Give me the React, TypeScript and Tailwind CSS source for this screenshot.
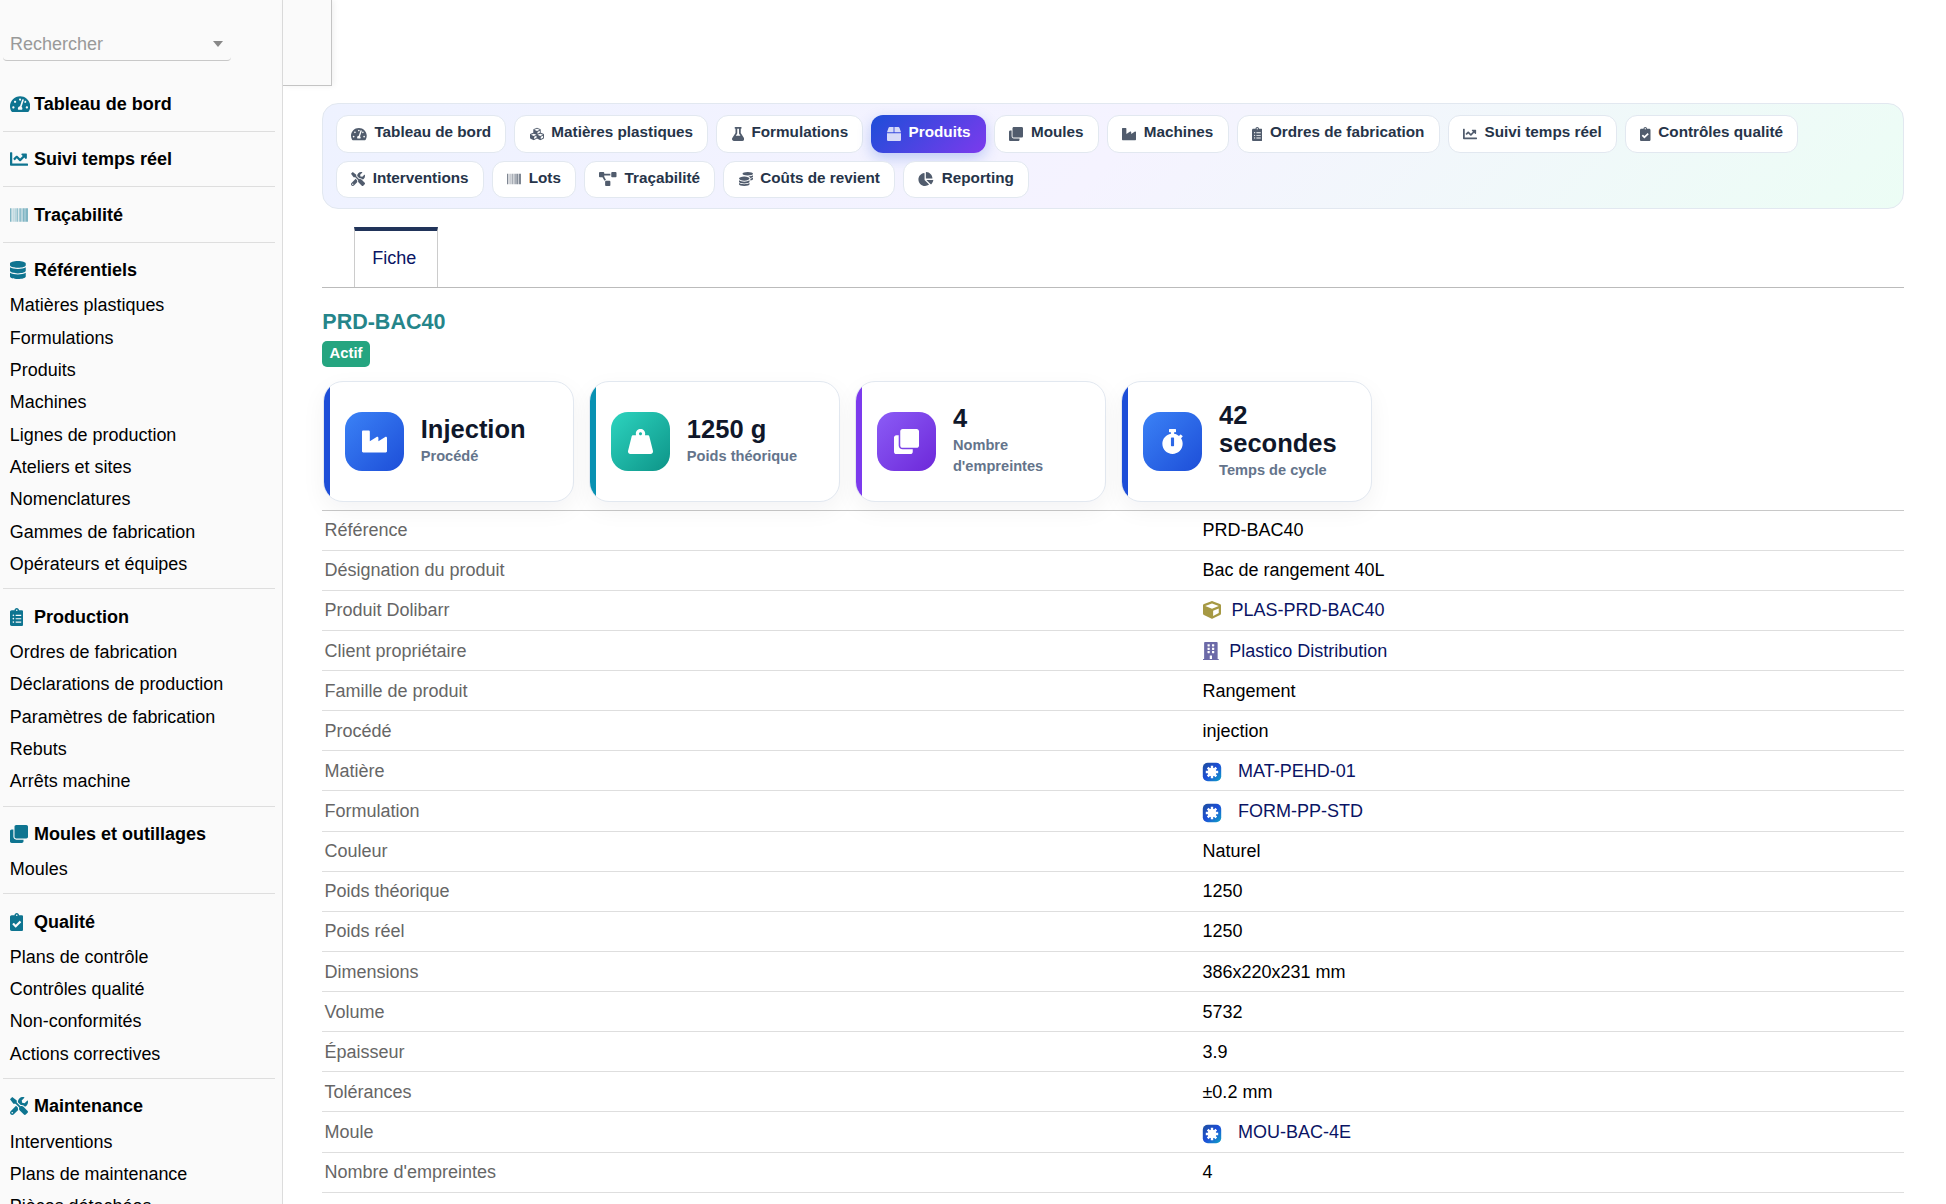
import React from "react";
import type { IconType } from "react-icons";
import {
  FaTachometerAlt, FaChartLine, FaBarcode, FaDatabase, FaClipboardList, FaClone, FaClipboardCheck, FaTools,
  FaCubes, FaFlask, FaBox, FaIndustry, FaProjectDiagram, FaCoins, FaChartPie, FaWeightHanging, FaStopwatch,
  FaCube, FaBuilding,
} from "react-icons/fa";

// Width-to-height ratios of the glyphs.
const narrow = "aspect-[384/512]";
const medium = "aspect-[448/512]";
const square = "aspect-square";
const wide = "aspect-[576/512]";
const wider = "aspect-[640/512]";

type Section = { icon: IconType; ratio: string; title: string; items: string[]; faded?: boolean };

const sections: Section[] = [
  { icon: FaTachometerAlt, ratio: wide, title: "Tableau de bord", items: [] },
  { icon: FaChartLine, ratio: square, title: "Suivi temps réel", items: [] },
  { icon: FaBarcode, ratio: square, title: "Traçabilité", items: [], faded: true },
  {
    icon: FaDatabase,
    ratio: medium,
    title: "Référentiels",
    items: [
      "Matières plastiques", "Formulations", "Produits", "Machines", "Lignes de production",
      "Ateliers et sites", "Nomenclatures", "Gammes de fabrication", "Opérateurs et équipes",
    ],
  },
  {
    icon: FaClipboardList,
    ratio: narrow,
    title: "Production",
    items: ["Ordres de fabrication", "Déclarations de production", "Paramètres de fabrication", "Rebuts", "Arrêts machine"],
  },
  { icon: FaClone, ratio: square, title: "Moules et outillages", items: ["Moules"] },
  {
    icon: FaClipboardCheck,
    ratio: narrow,
    title: "Qualité",
    items: ["Plans de contrôle", "Contrôles qualité", "Non-conformités", "Actions correctives"],
  },
  { icon: FaTools, ratio: square, title: "Maintenance", items: ["Interventions", "Plans de maintenance", "Pièces détachées"] },
];

type NavItem = { icon: IconType; ratio: string; label: string; active?: boolean };

const navRows: { height: string; items: NavItem[] }[] = [
  {
    height: "h-[38px]",
    items: [
      { icon: FaTachometerAlt, ratio: wide, label: "Tableau de bord" },
      { icon: FaCubes, ratio: square, label: "Matières plastiques" },
      { icon: FaFlask, ratio: medium, label: "Formulations" },
      { icon: FaBox, ratio: square, label: "Produits", active: true },
      { icon: FaClone, ratio: square, label: "Moules" },
      { icon: FaIndustry, ratio: square, label: "Machines" },
      { icon: FaClipboardList, ratio: narrow, label: "Ordres de fabrication" },
      { icon: FaChartLine, ratio: square, label: "Suivi temps réel" },
      { icon: FaClipboardCheck, ratio: narrow, label: "Contrôles qualité" },
    ],
  },
  {
    height: "h-[36.5px]",
    items: [
      { icon: FaTools, ratio: square, label: "Interventions" },
      { icon: FaBarcode, ratio: square, label: "Lots" },
      { icon: FaProjectDiagram, ratio: wider, label: "Traçabilité" },
      { icon: FaCoins, ratio: square, label: "Coûts de revient" },
      { icon: FaChartPie, ratio: wide, label: "Reporting" },
    ],
  },
];

const cards = [
  { icon: FaIndustry, value: "Injection", label: "Procédé", bar: "bg-[#1d4ed8]", tile: "from-[#3b82f6] to-[#1d4ed8]" },
  { icon: FaWeightHanging, value: "1250 g", label: "Poids théorique", bar: "bg-[#0891b2]", tile: "from-[#2dd4bf] to-[#0d9488]" },
  { icon: FaClone, value: "4", label: "Nombre d'empreintes", bar: "bg-[#7c3aed]", tile: "from-[#8b5cf6] to-[#6d28d9]" },
  { icon: FaStopwatch, value: "42 secondes", label: "Temps de cycle", bar: "bg-[#1d4ed8]", tile: "from-[#3b82f6] to-[#1d4ed8]" },
];

type Row = { label: string; value: string; kind?: "cube" | "building" | "badge" };

const rows: Row[] = [
  { label: "Référence", value: "PRD-BAC40" },
  { label: "Désignation du produit", value: "Bac de rangement 40L" },
  { label: "Produit Dolibarr", value: "PLAS-PRD-BAC40", kind: "cube" },
  { label: "Client propriétaire", value: "Plastico Distribution", kind: "building" },
  { label: "Famille de produit", value: "Rangement" },
  { label: "Procédé", value: "injection" },
  { label: "Matière", value: "MAT-PEHD-01", kind: "badge" },
  { label: "Formulation", value: "FORM-PP-STD", kind: "badge" },
  { label: "Couleur", value: "Naturel" },
  { label: "Poids théorique", value: "1250" },
  { label: "Poids réel", value: "1250" },
  { label: "Dimensions", value: "386x220x231 mm" },
  { label: "Volume", value: "5732" },
  { label: "Épaisseur", value: "3.9" },
  { label: "Tolérances", value: "±0.2 mm" },
  { label: "Moule", value: "MOU-BAC-4E", kind: "badge" },
  { label: "Nombre d'empreintes", value: "4" },
];

function BadgeIcon() {
  return (
    <svg viewBox="0 0 20 20" className="mt-[3px] mr-[15.5px] size-5 shrink-0">
      <defs>
        <linearGradient id="badge" x1="0" y1="0" x2="1" y2="1">
          <stop offset="0" stopColor="#1e4f9c" />
          <stop offset="0.5" stopColor="#1d4ed8" />
          <stop offset="1" stopColor="#0ea5c4" />
        </linearGradient>
      </defs>
      <rect x="0.8" y="0.8" width="18.4" height="18.4" rx="5" fill="url(#badge)" />
      <path d="M10 3.8V16.2M3.8 10H16.2M5.7 5.7L14.3 14.3M14.3 5.7L5.7 14.3" stroke="#fff" strokeWidth="2.4" />
      <circle cx="10" cy="10" r="4.3" fill="#fff" />
    </svg>
  );
}

function ValueIcon({ kind }: { kind: Row["kind"] }) {
  if (kind === "cube") return <FaCube className="mr-[10.7px] ml-[0.3px] size-[18px] shrink-0 text-[#a69944]" />;
  if (kind === "building") return <FaBuilding className="mr-[10.7px] ml-[0.3px] h-[18px] w-[15.75px] shrink-0 text-[#6c6aa8]" />;
  if (kind === "badge") return <BadgeIcon />;
  return null;
}

function Sidebar() {
  return (
    <aside className="h-full w-[283px] shrink-0 overflow-hidden border-r border-[#dcdcdc] bg-[#fafafa] pl-[3px]">
      <div className="h-[76.5px] pt-[27px]">
        <div className="flex h-[34px] w-[228px] items-center justify-between rounded-[4px] border-b border-[#c8c8c8] pt-[1.5px] pr-[8px] pl-[7px]">
          <span className="text-[18px] text-[#999]">Rechercher</span>
          <span className="border-x-[5px] border-t-[6px] border-x-transparent border-t-[#888]" />
        </div>
      </div>
      <nav>
        {sections.map(({ icon: Icon, ratio, title, items, faded }) => (
          <div key={title} className="w-[272px] border-b border-[#dedede] pb-[8.2px] pl-[6.8px]">
            <div className="flex h-[46.3px] items-center pt-[8.2px]">
              <span className="flex w-[24.2px] shrink-0">
                <Icon className={`h-[18px] w-auto ${ratio} ${faded ? "text-[#0e7490]/75" : "text-[#0e7490]"}`} />
              </span>
              <span className="text-[18px] leading-5 font-bold text-black">{title}</span>
            </div>
            {items.map((item) => (
              <div key={item} className="flex h-[32.33px] items-center text-[17.95px] leading-5 text-black">
                {item}
              </div>
            ))}
          </div>
        ))}
      </nav>
    </aside>
  );
}

function ModuleNav() {
  return (
    <div className="flex h-[106px] flex-col gap-[8.5px] rounded-[16px] border border-[#e2e8f0] bg-linear-[135deg] from-[#eef2ff] via-[#f5f3ff] to-[#ecfdf5] px-[12.5px] pt-[10.5px]">
      {navRows.map(({ height, items }) => (
        <div key={height} className={`flex gap-[8.1px] ${height}`}>
          {items.map(({ icon: Icon, ratio, label, active }) => (
            <div
              key={label}
              className={
                active
                  ? "flex items-center gap-[7.7px] rounded-[12px] bg-linear-[135deg] from-[#1d4ed8] to-[#7c3aed] px-[15.5px] text-white shadow-[0_5px_14px_rgba(29,78,216,0.25)]"
                  : "flex items-center gap-[7.7px] rounded-[12px] border border-[#e2e8f0] bg-white px-[14.2px] text-[#263449]"
              }
            >
              <Icon className={`h-[14px] w-auto shrink-0 opacity-80 ${ratio}`} />
              <span className="-mt-[3px] text-[15.28px] leading-5 font-bold whitespace-nowrap">{label}</span>
            </div>
          ))}
        </div>
      ))}
    </div>
  );
}

function StatCards() {
  return (
    <div className="mt-[14px] flex gap-[15px] pl-[0.7px]">
      {cards.map(({ icon: Icon, value, label, bar, tile }) => (
        <div
          key={label}
          className="relative flex h-[121px] w-[251.1px] items-center gap-[16.6px] overflow-hidden rounded-[20px] border border-[#e2e8f0] bg-white pr-[18px] pl-[21.2px] shadow-[0_8px_24px_rgba(15,23,42,0.05)]"
        >
          <span className={`absolute inset-y-0 left-0 w-[6px] ${bar}`} />
          <div className={`flex size-[59px] shrink-0 items-center justify-center rounded-[17px] bg-linear-[135deg] text-white ${tile}`}>
            <Icon className="size-[25px]" />
          </div>
          <div className="min-w-0 pb-px">
            <div className="text-[25.5px] leading-[28px] font-bold text-[#0f172a]">{value}</div>
            <div className="mt-[3px] text-[14.6px] leading-[21px] font-bold text-[#64748b]">{label}</div>
          </div>
        </div>
      ))}
    </div>
  );
}

function Details() {
  return (
    <div className="mt-[8px] border-t border-[#c8c8c8]">
      {rows.map(({ label, value, kind }) => (
        <div key={label} className="flex h-[40.14px] items-center border-b border-[#dedede] text-[18px] leading-5">
          <div className="w-[880.2px] shrink-0 pl-[2.2px] text-[#666]">{label}</div>
          <div className={kind ? "flex items-center text-[#0a1464]" : "flex items-center text-black"}>
            <ValueIcon kind={kind} />
            {value}
          </div>
        </div>
      ))}
    </div>
  );
}

export default function App() {
  return (
    <div className="flex h-[1204px] w-[1946px] overflow-hidden bg-white font-['Liberation_Sans',Arial,sans-serif]">
      <Sidebar />
      <div className="flex min-w-0 flex-1 flex-col">
        <div className="h-[86px] w-[49px] shrink-0 border-r border-b border-[#c4c4c4] bg-[#fafafa] shadow-[2px_0_6px_rgba(0,0,0,0.06)]" />
        <main className="mt-[17px] ml-[39.3px] w-[1582px]">
          <ModuleNav />
          <div className="mt-[18px] flex h-[61px] border-b border-[#bbb] pl-[31.7px]">
            <div className="flex w-[84px] items-center border-x border-t-4 border-x-[#ccc] border-t-[#21345a] pb-[2px] pl-[17.3px] text-[18px] leading-5 text-[#0a1464]">
              Fiche
            </div>
          </div>
          <h1 className="mt-[21px] text-[21.5px] leading-[26px] font-bold text-[#25858a]">PRD-BAC40</h1>
          <div className="mt-[5.6px] flex">
            <span className="flex h-[26px] items-center rounded-[5px] bg-[#25a580] px-[7.3px] pb-px text-[14.8px] leading-5 font-bold text-white">
              Actif
            </span>
          </div>
          <StatCards />
          <Details />
        </main>
      </div>
    </div>
  );
}
